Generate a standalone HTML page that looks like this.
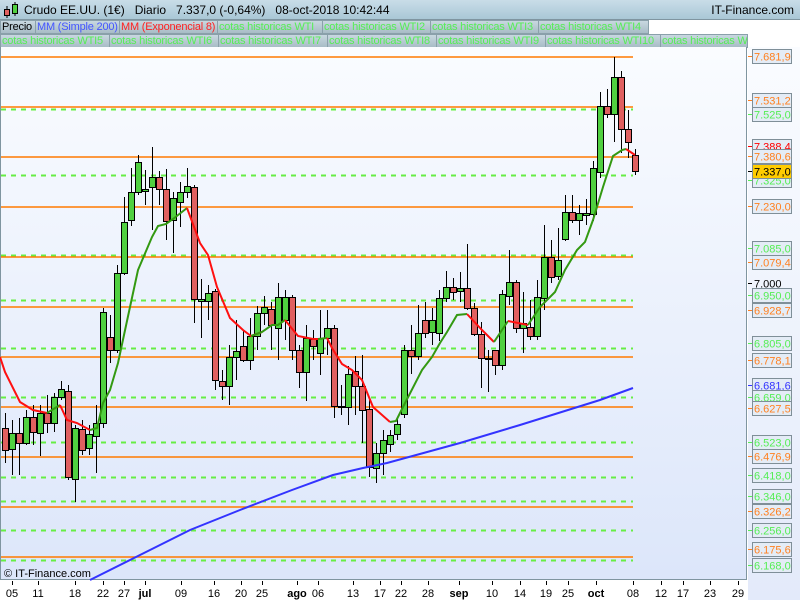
<!DOCTYPE html>
<html><head><meta charset="utf-8"><style>
*{margin:0;padding:0;box-sizing:border-box}
body{width:800px;height:600px;overflow:hidden;font-family:"Liberation Sans",sans-serif;background:#fff;position:relative}
#top{position:absolute;left:0;top:0;width:800px;height:20px;background:linear-gradient(#c9dde8,#a9c7d6);border-bottom:1px solid #7f95a0}
#top .t{position:absolute;left:24px;top:3px;font-size:12px;color:#000;white-space:pre}
#top .r{position:absolute;right:6px;top:3px;font-size:12px}
.row{position:absolute;left:0;height:14px;font-size:11px;white-space:nowrap;letter-spacing:-0.2px}
.c{position:absolute;top:0;height:14px;border:1px solid #8aa0aa;background:linear-gradient(#c8d8e0,#a8bcc6);line-height:12px;padding-left:1px;color:#55ee55;overflow:hidden}
#plot{position:absolute;left:0;top:47px;width:747px;height:533px;background:linear-gradient(#fafcff,#dce6fa);border-right:1px solid #7f95a0;border-bottom:1px solid #7f95a0;border-left:1px solid #7f95a0}
#raxis{position:absolute;left:748px;top:47px;width:52px;height:553px;background:linear-gradient(#fafcff,#e3eafa)}
#baxis{position:absolute;left:0;top:581px;width:748px;height:19px;background:#fff}
</style></head><body>
<div id="top">
<svg width="22" height="20" style="position:absolute;left:2px;top:0"><line x1="5" y1="6" x2="5" y2="18" stroke="#000"/><rect x="2.5" y="9.5" width="5" height="6" fill="#e06060" stroke="#000"/><line x1="13" y1="2" x2="13" y2="16" stroke="#000"/><rect x="10.5" y="4.5" width="5" height="9" fill="#50d040" stroke="#000"/></svg>
<div class="t">Crudo EE.UU. (1€)   Diario   7.337,0 (-0,64%)   08-oct-2018 10:42:44</div>
<div class="r">IT-Finance.com</div>
</div>
<div class="row" style="top:20px;width:800px">
<div class="c" style="left:0;width:36px;color:#000">Precio</div>
<div class="c" style="left:35px;width:85px;color:#4455ff">MM (Simple 200)</div>
<div class="c" style="left:119px;width:99px;color:#ff2020">MM (Exponencial 8)</div>
<div class="c" style="left:217px;width:106px">cotas historicas WTI</div>
<div class="c" style="left:322px;width:109px">cotas historicas WTI2</div>
<div class="c" style="left:430px;width:109px">cotas historicas WTI3</div>
<div class="c" style="left:538px;width:111px">cotas historicas WTI4</div>
</div>
<div class="row" style="top:34px;width:800px">
<div class="c" style="left:0;width:110px">cotas historicas WTI5</div>
<div class="c" style="left:109px;width:110px">cotas historicas WTI6</div>
<div class="c" style="left:218px;width:110px">cotas historicas WTI7</div>
<div class="c" style="left:327px;width:110px">cotas historicas WTI8</div>
<div class="c" style="left:436px;width:110px">cotas historicas WTI9</div>
<div class="c" style="left:545px;width:116px">cotas historicas WTI10</div>
<div class="c" style="left:660px;width:88px">cotas historicas WTI11</div>
</div>
<div id="plot"></div>
<div id="raxis"></div>
<div id="baxis"></div>
<svg id="ch" width="800" height="600" style="position:absolute;left:0;top:0" font-family="Liberation Sans, sans-serif">
<text x="4" y="577" font-size="11" fill="#000">© IT-Finance.com</text>
<g font-size="11" fill="#000" text-anchor="middle" id="xl">
<text x="12" y="597">05</text><text x="38" y="597">11</text><text x="75" y="597">18</text><text x="103" y="597">22</text><text x="124" y="597">27</text><text x="145" y="597" font-weight="bold">jul</text><text x="181" y="597">09</text><text x="214" y="597">16</text><text x="241" y="597">20</text><text x="262" y="597">25</text><text x="297" y="597" font-weight="bold">ago</text><text x="318" y="597">06</text><text x="353" y="597">13</text><text x="380" y="597">17</text><text x="401" y="597">22</text><text x="428" y="597">28</text><text x="459" y="597" font-weight="bold">sep</text><text x="492" y="597">10</text><text x="520" y="597">14</text><text x="546" y="597">19</text><text x="568" y="597">25</text><text x="596" y="597" font-weight="bold">oct</text><text x="633" y="597">08</text><text x="661" y="597">12</text><text x="683" y="597">17</text><text x="710" y="597">23</text><text x="738" y="597">29</text>
</g>
<g id="ticks" stroke="#000"></g>
<g id="lines"></g>
<g id="cand"></g>
<g id="ma"></g>
<g id="lab" font-size="11"></g>
</svg>
<script>
var NS="http://www.w3.org/2000/svg";
function el(p,t,a){var e=document.createElementNS(NS,t);for(var k in a)e.setAttribute(k,a[k]);p.appendChild(e);return e}
var Y=function(p){return 57+(7.6819-p)*332};
var L=document.getElementById('lines');
[7.525,7.325,7.085,6.950,6.805,6.659,6.523,6.418,6.346,6.256,6.168].forEach(function(p){var y=Math.round(Y(p))+.5;el(L,'line',{x1:1,x2:633,y1:y,y2:y,stroke:'#66ee44','stroke-width':2,'stroke-dasharray':'5,5'})});
[7.6819,7.5312,7.3806,7.2300,7.0794,6.9287,6.7781,6.6275,6.4769,6.3262,6.1756].forEach(function(p){var y=Math.round(Y(p));el(L,'line',{x1:1,x2:633,y1:y,y2:y,stroke:'#ff7a00','stroke-width':1.6})});
var T=document.getElementById('ticks');
[12,38,75,103,124,145,181,214,241,262,297,318,353,380,401,428,459,492,520,546,568,596,633,661,683,710,738].forEach(function(x){el(T,'line',{x1:x+.5,x2:x+.5,y1:581,y2:585})});
var D=[["r",428,450,413,463],["g",433,449,420,475],["r",433,443,418,475],["g",417,443,410,445],["r",417,432,405,445],["g",413,433,405,456],["r",413,423,395,433],["g",397,423,393,432],["g",389,397,381,400],["r",391,477,385,480],["g",428,479,425,502],["r",429,450,420,455],["g",434,448,425,455],["g",423,436,405,473],["g",312,423,308,428],["r",337,350,315,363],["g",273,350,265,353],["g",222,273,197,275],["g",192,220,168,226],["g",162,192,155,195],["g",189,191,170,205],["g",177,187,147,230],["r",177,189,171,205],["r",189,221,169,240],["g",198,220,192,253],["g",192,202,182,227],["g",186,192,168,198],["r",187,299,185,323],["g",299,301,279,338],["g",293,301,285,320],["r",291,380,289,390],["r",381,386,370,400],["g",357,386,345,405],["g",351,357,320,380],["r",346,360,330,362],["g",336,360,318,370],["g",313,336,306,350],["g",307,313,296,325],["r",309,325,302,350],["g",297,328,283,360],["g",297,320,290,340],["r",297,350,295,360],["r",350,372,345,388],["g",338,372,325,401],["r",339,346,330,360],["g",338,353,310,375],["g",328,338,310,355],["r",328,406,325,418],["g",406,407,385,415],["g",374,407,366,425],["r",371,386,356,415],["r",386,410,355,443],["r",409,467,400,477],["g",453,468,443,483],["g",440,453,430,475],["g",435,444,430,452],["g",424,434,418,440],["g",350,414,345,418],["r",350,356,325,374],["g",333,356,305,360],["r",320,333,302,338],["g",320,332,308,345],["g",298,333,290,341],["g",287,298,271,302],["r",287,292,278,300],["g",288,291,272,302],["r",288,308,244,310],["r",308,334,303,336],["r",334,358,322,388],["g",358,359,350,392],["r",350,365,350,375],["g",294,365,290,370],["g",282,296,250,305],["r",282,328,280,333],["g",323,328,292,353],["r",327,336,300,340],["g",297,336,280,340],["g",257,298,225,310],["r",257,277,240,283],["g",260,276,228,280],["g",212,239,195,241],["r",212,220,195,223],["g",213,220,205,235],["g",213,215,199,225],["g",168,214,161,221],["g",106,172,92,178],["r",106,114,89,118],["g",77,114,57,142],["r",77,129,71,153],["r",129,142,110,158],["r",155,171,149,175]];
var C=document.getElementById('cand');
D.forEach(function(d,i){var x=5+7*i;el(C,'line',{x1:x+.5,x2:x+.5,y1:d[3],y2:d[4],stroke:'#000'});el(C,'rect',{x:x-2.5,y:d[1]+.5,width:6,height:Math.max(1,d[2]-d[1]),fill:d[0]=='g'?'#50d040':'#e06060',stroke:'#000'})});
var M=document.getElementById('ma');
function pl(pts,col){el(M,'polyline',{points:pts,fill:'none',stroke:col,'stroke-width':2})}
pl("90,580 140,555 190,530 240,510 292,490 333,475 363,468 387,463 460,443 520,425 600,400 633,388","#3333ff");
pl("0,357 5,372 20,402 33,410 47,413","#ff1010");
pl("47,413 60,405","#339911");
pl("60,405 67,420 77,423 90,430","#ff1010");
pl("90,430 97,428 103,403 110,390 118,363 130,307 138,270 152,237 158,226 166,224 173,219 187,208","#339911");
pl("187,208 200,243 208,255 217,287 230,318 243,330 251,336 262,332","#ff1010");
pl("251,336 262,332 272,325 278,325 285,320","#339911");
pl("285,320 298,336 313,339 318,339","#ff1010");
pl("318,339 327,338","#339911");
pl("327,338 332,348 342,364 352,370 362,380 373,407 390,422","#ff1010");
pl("390,422 396,421 403,407 422,370 432,357 440,343 447,332 457,315 467,314","#339911");
pl("467,314 482,330 494,342","#ff1010");
pl("494,342 508,321","#339911");
pl("508,321 528,325","#ff1010");
pl("528,325 540,307 555,292 565,270 577,250 585,242 593,220 603,187 613,156 622,150 626,149","#339911");
pl("626,149 635,155","#ff1010");
var LB=document.getElementById('lab');
var G='#55ee55',O='#ff8020';
[["7.681,9",56,O],["7.531,2",100,O],["7.525,0",114,G],["7.388,4",146,'#ff0000'],["7.380,6",156,O],["7.325,0",180,G],["7.337,0",171,'#000','y'],["7.230,0",206,O],["7.085,0",248,G],["7.079,4",262,O],["7.000",283,'#000','n'],["6.950,0",295,G],["6.928,7",310,O],["6.805,0",343,G],["6.778,1",360,O],["6.681,6",385,'#3333ff'],["6.659,0",397,G],["6.627,5",408,O],["6.523,0",442,G],["6.476,9",456,O],["6.418,0",475,G],["6.346,0",496,G],["6.326,2",511,O],["6.256,0",530,G],["6.175,6",549,O],["6.168,0",565,G]].forEach(function(l){
var y=l[1];el(LB,'line',{x1:748,x2:752,y1:y+.5,y2:y+.5,stroke:l[2]});
if(l[3]!='n'){el(LB,'rect',{x:752.5,y:y-6.5,width:39,height:14,fill:l[3]=='y'?'#ffcc00':'#e4ecf6',stroke:'#7f8f98'})}
var t=el(LB,'text',{x:754,y:y+4.5,fill:l[2]});t.textContent=l[0];});
</script>
</body></html>
